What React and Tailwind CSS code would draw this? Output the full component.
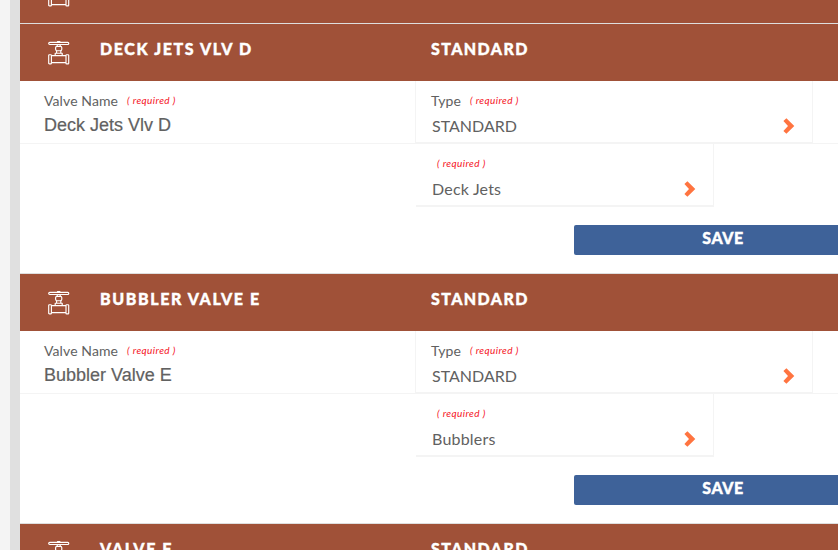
import React from 'react';

const valves = [
  { id: 'c', open: false },
  { id: 'd', title: 'DECK JETS VLV D', name: 'Deck Jets Vlv D', type: 'STANDARD', use: 'Deck Jets', open: true },
  { id: 'e', title: 'BUBBLER VALVE E', name: 'Bubbler Valve E', type: 'STANDARD', use: 'Bubblers', open: true },
  { id: 'f', title: 'VALVE F', type: 'STANDARD', open: false },
];

function ValveIcon() {
  return (
    <svg
      width="22"
      height="24"
      viewBox="0 0 22 24"
      fill="none"
      stroke="#fff"
      strokeWidth="1.15"
      strokeLinejoin="round"
      className="shrink-0"
    >
      <rect x="0.7" y="1.4" width="20.1" height="2.1" rx="1" />
      <path d="M9.5 1.2V0.6h2.4v0.6M9.2 3.6v1.8M12.2 3.6v1.8" />
      <rect x="7.6" y="5.4" width="6.2" height="4.3" rx="1.4" />
      <path d="M8.6 9.7v2.4M12.8 9.7v2.4" />
      <path d="M7.2 14.3v-2.1h7v2.1" />
      <rect x="0.7" y="13.7" width="2.7" height="9.1" rx="0.6" />
      <rect x="18" y="13.7" width="2.7" height="9.1" rx="0.6" />
      <path d="M3.4 14.6H18M3.4 21.6H18" />
    </svg>
  );
}

function Chevron() {
  return (
    <svg width="12" height="16" viewBox="0 0 12 16" fill="#ff7440" className="shrink-0">
      <path d="M3.4 0.2 11.3 8 3.4 15.8 0.4 12.9 5 8 0.4 3.1Z" />
    </svg>
  );
}

function Required() {
  return (
    <span className="pb-[2px] text-[10px] italic leading-[14px] tracking-[0.4px] text-[#f5141e]">( required )</span>
  );
}

function ValveHeader({ title, type }) {
  return (
    <div className="flex h-[57px] bg-[#a05138] pl-7 text-base font-black leading-5 text-white [-webkit-text-stroke:0.4px_#fff]">
      <div className="w-[52px] pt-[17px]">
        <ValveIcon />
      </div>
      {title && <h2 className="w-[331px] pt-[15px] tracking-[1.6px]">{title}</h2>}
      {type && <span className="pt-[15px] tracking-[1.4px]">{type}</span>}
    </div>
  );
}

function ValveForm({ name, type, use }) {
  return (
    <div className="h-[192px] bg-white text-[#616161]">
      <div className="flex h-[63px] border-b border-[#f4f4f4]">
        <div className="w-[395px] pl-6 pt-3">
          <div className="flex h-4 items-center gap-[9px]">
            <label className="text-sm leading-4 tracking-[0.1px]">Valve Name</label>
            <Required />
          </div>
          <div className="pt-[6px] font-['Liberation_Sans',sans-serif] text-lg leading-5 [-webkit-text-stroke:0.2px_#616161]">
            {name}
          </div>
        </div>
        <div className="h-[63px] w-[398px] border-x border-b-2 border-[#f4f4f4] pl-[15px] pt-3">
          <div className="flex h-4 items-center gap-[9px]">
            <label className="text-sm leading-4 tracking-[0.1px]">Type</label>
            <Required />
          </div>
          <div className="flex items-center justify-between pl-px pr-[17px] pt-[7px]">
            <span className="text-base leading-5">{type}</span>
            <Chevron />
          </div>
        </div>
      </div>
      <div className="ml-[396px] h-[63px] w-[298px] border-b-2 border-r border-[#f4f4f4] pl-4 pt-3">
        <div className="flex h-4 items-center pl-[5px]">
          <Required />
        </div>
        <div className="flex items-center justify-between pr-[17px] pt-[7px]">
          <span className="text-base leading-5 tracking-[0.2px]">{use}</span>
          <Chevron />
        </div>
      </div>
      <button className="ml-[554px] mt-[18px] block h-[30px] w-[298px] rounded-xs bg-[#3e6299] pb-[5px] text-base font-black leading-5 tracking-[0.5px] text-white [-webkit-text-stroke:0.4px_#fff]">
        SAVE
      </button>
    </div>
  );
}

export default function App() {
  return (
    <div className="flex h-[550px] w-[838px] overflow-hidden bg-[#f4f4f4] pl-[10px] font-[Lato,sans-serif]">
      <div className="w-[10px] shrink-0 bg-[#e0e0e0]" />
      <main className="-mt-[35px] w-[818px] shrink-0">
        {valves.map((valve) => (
          <section key={valve.id} className="border-t border-[#dedede]">
            <ValveHeader title={valve.title} type={valve.type} />
            {valve.open && <ValveForm name={valve.name} type={valve.type} use={valve.use} />}
          </section>
        ))}
      </main>
    </div>
  );
}
